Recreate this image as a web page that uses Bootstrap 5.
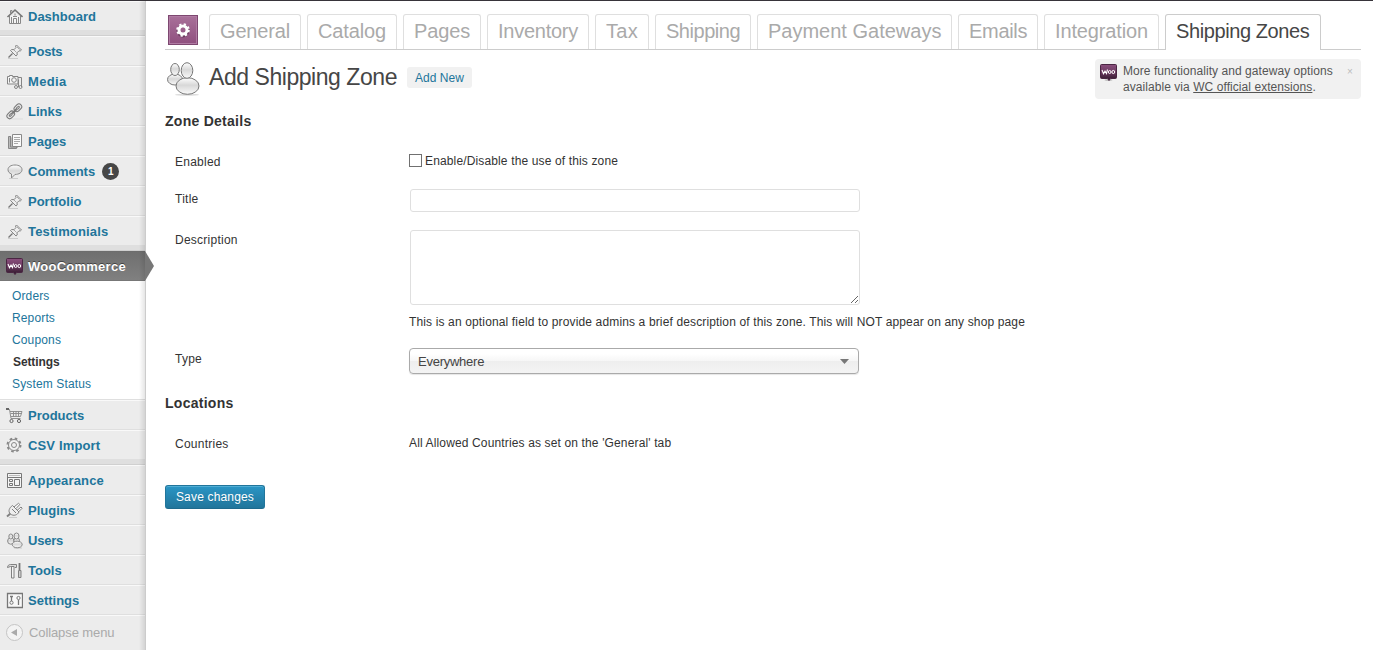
<!DOCTYPE html>
<html lang="en">
<head>
<meta charset="utf-8">
<title>Add Shipping Zone</title>
<meta name="viewport" content="width=device-width, initial-scale=1">
<link href="https://cdn.jsdelivr.net/npm/bootstrap@5.3.0/dist/css/bootstrap.min.css" rel="stylesheet">
<style>
  body{font-family:"Liberation Sans",Arial,sans-serif;font-size:12px;line-height:16px;letter-spacing:.14px;color:#333;background:#fff;height:650px;overflow:hidden}
  a{color:#21759b;text-decoration:none}
  .topbar{height:1px;background:#37343a}
  .side{width:146px;height:649px;background:#ececec;border-right:1px solid #ccc;flex:none}
  .side::after{content:"";position:absolute;top:0;right:0;width:6px;height:100%;background:linear-gradient(90deg,transparent,rgba(0,0,0,.1));pointer-events:none}
  .side .nav-link{height:30px;padding:2px 0 0 6px;border-top:1px solid #f9f9f9;border-bottom:1px solid #dfdfdf;color:#21759b;font-size:13px;font-weight:700;line-height:18px;letter-spacing:0;gap:5px}
  .side .nav-link svg{width:17px;height:17px;flex:none;margin-top:-1px}
  .side .wide1{letter-spacing:.15px}
  .side .wide2{letter-spacing:.35px}
  .side .tight{letter-spacing:-.2px}
  .sep{height:5px;background:#dfdfdf;border-bottom:1px solid #d0d0d0}
  .side .nav-link.current{background:linear-gradient(#6f6f6f,#808080);color:#fff;border-color:#6d6d6d #6d6d6d #777;text-shadow:0 -1px 0 #444;letter-spacing:.25px}
  .current::after{content:"";position:absolute;z-index:2;left:100%;top:-1px;width:9px;height:30px;background:#777;clip-path:polygon(0 0,100% 50%,0 100%)}
  .subs{height:119px;background:#fff;padding:4px 0 0 12px;border-bottom:1px solid #dfdfdf}
  .subs a{display:block;line-height:22px;height:22px}
  .subs a.on{color:#333;font-weight:700;padding-left:1px;letter-spacing:-.1px}
  .count{width:17px;height:17px;background:#464646;color:#fff;font-size:10px;line-height:17px;margin:-1px 0 0 2px}
  .side .nav-link.fold{color:#aaa;font-weight:400;border-bottom:0;height:34px;letter-spacing:-.1px;gap:6px;padding-top:0}
  .main{padding-left:19px;width:1215px}
  .tabs{height:49px;padding-top:13px;border-bottom:1px solid #ccc;gap:6px}
  .tabs a{height:35px;width:var(--w);letter-spacing:var(--k);padding:4px 0 0 10px;border:1px solid #dfdfdf;border-bottom:0;border-radius:3px 3px 0 0;font-size:20px;line-height:24px;color:#aaa;white-space:nowrap;flex:none}
  .tabs a.on{height:36px;border-color:#ccc;color:#464646;background:#fff}
  .t1{--w:92px;--k:-.17px}.t2{--w:90px;--k:-.13px}.t3{--w:78px;--k:-.14px}.t4{--w:102px;--k:-.25px}.t5{--w:54px;--k:.3px}
  .t6{--w:96px;--k:-.47px}.t7{--w:195px;--k:0px}.t8{--w:80px;--k:-.3px}.t9{--w:115px;--k:-.13px}.t10{--w:156px;--k:-.4px}
  .gear{width:30px;height:30px;margin:1px 5px 0 3px;flex:none}
  .people{width:34px;height:34px;margin:12px 0 0 1px;flex:none}
  h1{font-size:23px;line-height:29px;font-weight:400;color:#464646;letter-spacing:-.45px;margin:13px 0 0 9px}
  .addnew{margin:17px 0 0 10px;height:21px;line-height:22px;width:65px;text-align:center;background:#f1f1f1;border-radius:3px;letter-spacing:.05px}
  .notice{margin:9px 0 0;width:266px;height:40px;background:#f1f1f1;border-radius:4px;color:#555;padding:4px 8px 0 5px;letter-spacing:.06px}
  .notice svg{width:17px;height:17px;flex:none;margin:1px 6px 0 0}
  .notice a{color:#555;text-decoration:underline}
  .notice .x{font-size:10px;color:#bbb;line-height:17px}
  h3{font-size:14px;line-height:18px;font-weight:700;letter-spacing:.27px;margin:0}
  .field{padding-left:10px}
  .field>.cap{width:234px;flex:none;letter-spacing:.25px}
  .form-check-input.box{width:13px;height:13px;border:1px solid #707070;border-radius:0;margin:0 3px 2px 0;float:none}
  .form-control.txt{width:450px;border:1px solid #dfdfdf;border-radius:3px;margin-left:1px;padding:2px}
  .chosen{width:450px;height:26px;border:1px solid #aaa;border-radius:4px;background:linear-gradient(#fff 20%,#f6f6f6 50%,#eee 52%,#f4f4f4);box-shadow:0 1px 1px rgba(0,0,0,.1);color:#444;font-size:13px;letter-spacing:-.25px;padding:1px 9px 0 8px}
  .btn.save{width:100px;height:24px;padding:1px 0 0;border:1px solid #21759b;border-bottom-color:#1e6a8d;border-radius:3px;background:linear-gradient(#2a95c5,#21759b);box-shadow:inset 0 1px 0 rgba(120,200,230,.5);color:#fff;font-size:12px;line-height:21px;letter-spacing:.17px;text-shadow:0 1px 0 rgba(0,0,0,.1)}
  .zone1{margin-top:12px}
  .r1{height:36px;margin-top:23px}.r1 .cap{padding-top:1px}.r1 label{height:16px}
  .r2{height:41px}.r2 .cap{padding-top:2px}.r2 .txt{height:23px}
  .r3{height:118px}.r3 .cap{padding-top:2px}.r3 textarea.txt{height:75px;min-height:0;resize:vertical}.r3 p{margin-top:9px}
  .r4{height:46px}.r4 .cap{padding-top:3px}
  .r5{margin-top:23px;height:50px}.r5 .cap{padding-top:1px}
</style>
</head>
<body>
<svg class="position-absolute" width="0" height="0">
  <defs>
    <linearGradient id="pl" x1="0" y1="0" x2="0" y2="1"><stop offset="0" stop-color="#8a4f7d"/><stop offset=".5" stop-color="#6b3a60"/><stop offset="1" stop-color="#2b1527"/></linearGradient>
    <linearGradient id="gv" x1="0" y1="0" x2="0" y2="1"><stop offset="0" stop-color="#fff"/><stop offset=".45" stop-color="#d8d8d8"/><stop offset="1" stop-color="#fafafa"/></linearGradient>
    <symbol id="pin" viewBox="0 0 17 17"><path d="M2 15.500h10" stroke="#ccc"/><path d="M2.500 14.500 6.500 10.500" stroke="#777" stroke-width="1.300"/><path d="M10.500 2 15.500 7l-1.300 1-1.200-.2-2 2 .2 2.200-1.200 1L4.500 7.500l1.200-1 2.300.2L10 4.500 9.500 3z" fill="#eee" stroke="#858585"/><path d="M8 7l2.500 2.500M11 4l2.500 2.500" stroke="#aaa"/></symbol>
    <symbol id="people" viewBox="0 0 34 34"><ellipse cx="21" cy="32.800" rx="12" ry="1" fill="#ddd"/><g fill="url(#gv)" stroke="#777"><ellipse cx="9" cy="17.500" rx="7.500" ry="5.500"/><ellipse cx="9" cy="7.500" rx="4.300" ry="6"/><ellipse cx="21.500" cy="24" rx="11.500" ry="8.300"/><ellipse cx="21" cy="8.500" rx="5.800" ry="7.800"/></g></symbol>
    <symbol id="woo" viewBox="0 0 17 17"><ellipse cx="8.500" cy="16" rx="4" ry=".8" fill="#777" opacity=".5"/><path d="M1.500.5h14q1 0 1 1v12q0 1-1 1h-5l-1.500 2-1.500-2h-6q-1 0-1-1v-12q0-1 1-1z" fill="url(#pl)" stroke="#4a2643"/><path d="M2 6 3.500 9.700 5 7l1.500 2.500L7.500 5.500" fill="none" stroke="#fff" stroke-width="1.100"/><g fill="none" stroke="#fff"><ellipse cx="9.700" cy="8" rx="1.300" ry="1.500"/><ellipse cx="13.300" cy="8" rx="1.400" ry="1.600"/></g></symbol>
  </defs>
</svg>
<div class="topbar"></div>
<div class="d-flex">
  <nav class="side nav flex-column flex-nowrap position-relative">
    <a class="nav-link d-flex align-items-center" href="#"><svg viewBox="0 0 17 17" fill="none" stroke="#888"><path d="M3.500 8v7.500h11V8" fill="#f4f4f4"/><path d="M1.500 9 9 2l7.500 7" stroke="#777" stroke-width="1.600"/><path d="M4.500 5V2.500h1.500V4M7.500 15.500v-5h3v5M5.500 9v6M12.500 9v6M7 8.500h4M9 5.500v2"/></svg>Dashboard</a>
    <div class="sep"></div>
    <a class="nav-link d-flex align-items-center tight" href="#"><svg fill="none"><use href="#pin"/></svg>Posts</a>
    <a class="nav-link d-flex align-items-center wide2" href="#"><svg viewBox="0 0 17 17" fill="none" stroke="#858585"><path d="M1.500 3.500h2v-1h3v1h5.500v7.500H1.500z" fill="#f5f5f5"/><circle cx="8" cy="7" r="2.300"/><path d="M3.500 5v4.500M12 4.500h3.500V14M12.500 6.500V14"/><circle cx="10" cy="14" r="1.500"/><circle cx="14.500" cy="14" r="1.500"/></svg>Media</a>
    <a class="nav-link d-flex align-items-center" href="#"><svg viewBox="0 0 17 17" fill="none"><path d="M5 16h12" stroke="#ddd"/><g stroke="#777" transform="rotate(-45 8.500 8.500)"><rect x="-.8" y="5.500" width="8.500" height="5.500" rx="2.700" fill="#e4e4e4"/><rect x="1.700" y="7.500" width="3.500" height="1.500" rx=".7" fill="#f4f4f4"/><rect x="9.300" y="5.500" width="8.500" height="5.500" rx="2.700" fill="#e4e4e4"/><rect x="11.800" y="7.500" width="3.500" height="1.500" rx=".7" fill="#f4f4f4"/><path d="M5.500 8.300h6" stroke-width="2"/></g></svg>Links</a>
    <a class="nav-link d-flex align-items-center" href="#"><svg viewBox="0 0 17 17" stroke="#888"><path d="M5 3.500H2.500v12h8V14" fill="#bbb"/><path d="M6.500 1.500h9v12h-9z" fill="#fafafa"/><path d="M4.500 3v11H12" fill="none"/><path d="M8 4.500h6M8 6.500h6M8 8.500h6M8 10.500h4" stroke="#aaa"/></svg>Pages</a>
    <a class="nav-link d-flex align-items-center" href="#"><svg viewBox="0 0 17 17"><path d="M3 15.500h9" stroke="#ccc"/><path d="M9 2c4 0 7 1.800 7 4.700s-3 4.700-7 4.700L5.500 15v-4C3.300 10.200 2 8.800 2 6.700 2 3.800 5 2 9 2z" fill="url(#gv)" stroke="#888"/></svg>Comments<span class="count rounded-circle text-center">1</span></a>
    <a class="nav-link d-flex align-items-center" href="#"><svg fill="none"><use href="#pin"/></svg>Portfolio</a>
    <a class="nav-link d-flex align-items-center wide1" href="#"><svg fill="none"><use href="#pin"/></svg>Testimonials</a>
    <div class="sep"></div>
    <a class="nav-link d-flex align-items-center current position-relative" href="#"><svg><use href="#woo"/></svg>WooCommerce</a>
    <div class="subs"><a href="#">Orders</a><a href="#">Reports</a><a href="#">Coupons</a><a class="on" href="#">Settings</a><a href="#">System Status</a></div>
    <a class="nav-link d-flex align-items-center" href="#"><svg viewBox="0 0 17 17" fill="none" stroke="#888"><path d="M0 2.500h3.500l1.500 9h9.500M4 4.500h12l-1.500 5H5M4.500 6.500h11M7.500 4.500v5M10 4.500v5M12.500 4.500v5" stroke-width=".9"/><path d="M0 2h3" stroke="#666" stroke-width="2"/><circle cx="5.500" cy="14" r="1.600" stroke="#666"/><circle cx="13" cy="14" r="1.600" stroke="#666"/></svg>Products</a>
    <a class="nav-link d-flex align-items-center wide1" href="#"><svg viewBox="0 0 17 17" fill="none" stroke="#888"><circle cx="8" cy="8" r="6.500" stroke-width="2" stroke-dasharray="2.550 2.550"/><circle cx="8" cy="8" r="5.500" fill="#f1f1f1"/><circle cx="8" cy="8" r="2.500"/></svg>CSV Import</a>
    <div class="sep"></div>
    <a class="nav-link d-flex align-items-center wide1" href="#"><svg viewBox="0 0 17 17" fill="none" stroke="#777"><path d="M1.500 1.500h14v14h-14z" fill="#f5f5f5"/><path d="M3 3.500h11" stroke="#bbb"/><path d="M2 5.500h13M3.500 7.500h3v2h-3zM3.500 11.500h3v2h-3zM8.500 7.500h5v6h-5z"/></svg>Appearance</a>
    <a class="nav-link d-flex align-items-center" href="#"><svg viewBox="0 0 17 17" fill="none" stroke="#808080"><path d="M3 15.500h8" stroke="#ccc"/><path d="M1 14.500 4.500 11.500" stroke-width="2"/><path d="m8 5 4.500-3.700 1.300 1.200L10 6.500M11 8.500 15 5l1.200 1.200-4 4" fill="#fff"/><path d="M6.500 3.500 13 10c-1.500 3-5.500 4.500-8.500 2S3.500 5.500 6.500 3.500z" fill="#eee"/><path d="M6 7l4 4"/></svg>Plugins</a>
    <a class="nav-link d-flex align-items-center tight" href="#"><svg viewBox="0 0 17 17" stroke="#888"><path d="M8 16h8" stroke="#ccc"/><g fill="url(#gv)"><circle cx="4.800" cy="9" r="3.200"/><ellipse cx="4.800" cy="4.500" rx="2" ry="2.500"/><circle cx="10.700" cy="8.500" r="2.800"/><ellipse cx="11.200" cy="12.500" rx="5" ry="3.300"/><ellipse cx="10.500" cy="4" rx="2.500" ry="3"/></g></svg>Users</a>
    <a class="nav-link d-flex align-items-center" href="#"><svg viewBox="0 0 17 17" fill="none" stroke="#808080"><path d="M1.500 5.500c0-2 1.500-3 3-3h6v3H9l-1-1H4.500z" fill="#ddd"/><path d="M5.500 5v11h2.500V5" fill="#f5f5f5"/><path d="M13.500 1v7" stroke="#777" stroke-width="1.800"/><path d="M12.500 8.500h2.500v7h-2.500z" fill="#ccc"/></svg>Tools</a>
    <a class="nav-link d-flex align-items-center" href="#"><svg viewBox="0 0 17 17" fill="none" stroke="#777"><path d="M1.500 1.500h15v14h-15z" fill="#f8f8f8" stroke-width="1.300"/><path d="M5.500 4v5M12.500 8v5M4 4.500h3" stroke-width="1.300"/><circle cx="5.500" cy="10.700" r="1.600"/><circle cx="12.500" cy="6" r="1.600"/></svg><span>Settings</span></a>
    <a class="nav-link d-flex align-items-center fold" href="#"><svg viewBox="0 0 17 17"><circle cx="8.500" cy="8.500" r="8" fill="#f3f3f3" stroke="#c4c4c4"/><path d="M5 8.500 11 5v7z" fill="#aaa"/></svg>Collapse menu</a>
  </nav>
  <main class="main">
    <div class="tabs d-flex">
      <svg class="gear" viewBox="0 0 30 30"><defs><linearGradient id="gp" x1="0" y1="0" x2="0" y2="1"><stop offset="0" stop-color="#a9719a"/><stop offset="1" stop-color="#8f4f7e"/></linearGradient></defs><rect x=".5" y=".5" width="29" height="29" fill="url(#gp)" stroke="#7d4770"/><rect x="1.500" y="1.500" width="27" height="27" fill="none" stroke="#b07ba3"/><circle cx="15" cy="16" r="5" fill="none" stroke="#6d3b60" stroke-width="3"/><circle cx="15" cy="15" r="5.600" fill="none" stroke="#fff" stroke-width="2.400" stroke-dasharray="2.200 2.200"/><circle cx="15" cy="15" r="4" fill="none" stroke="#fff" stroke-width="3"/></svg>
      <a class="t1" href="#">General</a><a class="t2" href="#">Catalog</a><a class="t3" href="#">Pages</a><a class="t4" href="#">Inventory</a><a class="t5" href="#">Tax</a><a class="t6" href="#">Shipping</a><a class="t7" href="#">Payment Gateways</a><a class="t8" href="#">Emails</a><a class="t9" href="#">Integration</a><a class="t10 on" href="#">Shipping Zones</a>
    </div>
    <div class="d-flex align-items-start">
      <svg class="people"><use href="#people"/></svg>
      <h1 class="mb-2">Add Shipping Zone</h1>
      <a class="addnew" href="#">Add New</a>
      <div class="notice ms-auto d-flex">
        <svg><use href="#woo"/></svg>
        <div>More functionality and gateway options<br>available via <a href="#">WC official extensions</a>.</div>
        <span class="x ms-auto">×</span>
      </div>
    </div>
    <h3 class="zone1">Zone Details</h3>
    <div class="field r1 d-flex"><div class="cap">Enabled</div><label class="d-flex align-items-center"><input type="checkbox" class="form-check-input box">Enable/Disable the use of this zone</label></div>
    <div class="field r2 d-flex"><div class="cap">Title</div><input type="text" class="form-control txt"></div>
    <div class="field r3 d-flex"><div class="cap">Description</div><div><textarea class="form-control txt"></textarea><p class="mb-0">This is an optional field to provide admins a brief description of this zone. This will NOT appear on any shop page</p></div></div>
    <div class="field r4 d-flex"><div class="cap">Type</div><div class="chosen d-flex align-items-center justify-content-between">Everywhere<svg width="9" height="5"><path d="M0 0h9L4.500 5z" fill="#777"/></svg></div></div>
    <h3>Locations</h3>
    <div class="field r5 d-flex"><div class="cap">Countries</div><div>All Allowed Countries as set on the 'General' tab</div></div>
    <button class="btn save d-block" type="button">Save changes</button>
  </main>
</div>
<script src="https://cdn.jsdelivr.net/npm/bootstrap@5.3.0/dist/js/bootstrap.bundle.min.js"></script>
</body>
</html>
